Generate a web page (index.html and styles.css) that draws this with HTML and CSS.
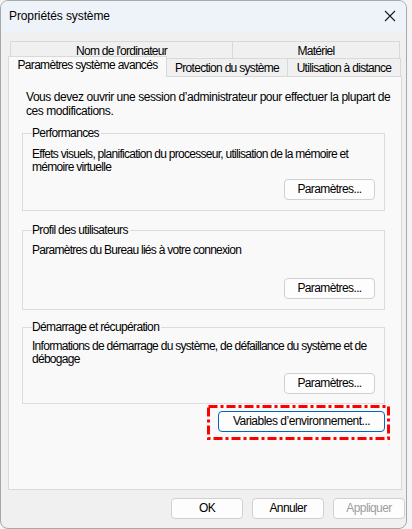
FILE: index.html
```html
<!DOCTYPE html>
<html lang="fr">
<head>
<meta charset="utf-8">
<title>Propriétés système</title>
<link rel="stylesheet" href="styles.css">
</head>
<body>
<div class="window">
  <div class="titlebar">
    <span class="title">Propriétés système</span>
    <svg class="close" width="12" height="12" viewBox="0 0 12 12"><path d="M1 1 L11 11 M11 1 L1 11" stroke="#1a1a1a" stroke-width="1.1" fill="none"/></svg>
  </div>
  <div class="client">
    <div class="tabs">
      <div class="tabrow row1">
        <div class="tab t-nom">Nom de l'ordinateur</div>
        <div class="tab t-mat">Matériel</div>
      </div>
      <div class="tabrow row2">
        <div class="tab selected t-adv">Paramètres système avancés</div>
        <div class="tab t-pro">Protection du système</div>
        <div class="tab t-uti">Utilisation à distance</div>
      </div>
    </div>
    <div class="panel">
      <p class="intro">Vous devez ouvrir une session d’administrateur pour effectuer la plupart de ces modifications.</p>
      <fieldset class="group g-perf">
        <legend>Performances</legend>
        <p class="desc">Effets visuels, planification du processeur, utilisation de la mémoire et mémoire virtuelle</p>
        <div class="btnrow"><button class="btn">Paramètres...</button></div>
      </fieldset>
      <fieldset class="group g-prof">
        <legend>Profil des utilisateurs</legend>
        <p class="desc">Paramètres du Bureau liés à votre connexion</p>
        <div class="btnrow"><button class="btn">Paramètres...</button></div>
      </fieldset>
      <fieldset class="group g-dem">
        <legend>Démarrage et récupération</legend>
        <p class="desc">Informations de démarrage du système, de défaillance du système et de débogage</p>
        <div class="btnrow"><button class="btn">Paramètres...</button></div>
      </fieldset>
      <div class="envrow">
        <div class="highlight">
          <svg class="dashbox" width="183" height="35" viewBox="0 0 183 35"><rect x="1.5" y="1.5" width="180" height="32" fill="none" stroke="#ff0000" stroke-width="3" stroke-dasharray="9 3 3 3"/></svg>
          <button class="btn btn-env">Variables d’environnement...</button>
        </div>
      </div>
    </div>
    <div class="footer">
      <button class="btn btn-foot">OK</button>
      <button class="btn btn-foot">Annuler</button>
      <button class="btn btn-foot disabled">Appliquer</button>
    </div>
  </div>
</div>
</body>
</html>
```
FILE: styles.css
```css
* { box-sizing: border-box; }
html, body { margin: 0; padding: 0; }
body {
  background: #f4f4f4;
  width: 412px;
  height: 529px;
  overflow: hidden;
  font-family: "Liberation Sans", Arial, sans-serif;
  font-size: 12px;
  letter-spacing: -0.45px;
  color: #000;
}
.window {
  width: 407px;
  height: 529px;
  border: 1px solid #a8a8a8;
  border-radius: 8px;
  background: #f0f0f0;
  overflow: hidden;
  display: flex;
  flex-direction: column;
}
.titlebar {
  height: 31px;
  flex: none;
  background: #eef3f9;
  display: flex;
  align-items: center;
  justify-content: space-between;
  padding: 0 10px 0 8px;
}
.title { font-size: 12px; letter-spacing: -0.1px; color: #000; margin-top: -1px; }
.close { display: block; margin-top: -1px; }
.client { flex: 1; padding: 9px 0 0 7px; }
.tabs { display: flex; flex-direction: column; }
.tabrow { display: flex; }
.row1 { margin-left: 2px; height: 17px; }
.row2 { height: 18px; }
.tab {
  border: 1px solid #d9d9d9;
  border-bottom: none;
  background: #f0f0f0;
  text-align: center;
  line-height: 18px;
  white-space: nowrap;
  letter-spacing: -0.7px;
}
.row2 .tab { line-height: 17px; padding-top: 1px; }
.t-nom { width: 223px; }
.t-mat { width: 168px; margin-left: -1px; }
.t-adv { width: 159px; }
.t-pro { width: 122px; margin-left: -1px; }
.t-uti { width: 114px; margin-left: -1px; }
.row2 .tab.selected {
  position: relative;
  z-index: 2;
  background: #f9f9f9;
  margin-top: -2px;
  height: 21px;
  padding-top: 0;
  line-height: 17px;
}
.panel {
  width: 394px;
  height: 414px;
  border: 1px solid #d9d9d9;
  background: #f9f9f9;
}
.intro {
  margin: 13px 0 0 17px;
  line-height: 14px;
  width: 366px;
}
.group {
  margin: 8px 0 0 13px;
  width: 363px;
  border: 1px solid #dcdcdc;
  padding: 0 9px 10px 9px;
  min-width: 0;
}
.group legend {
  padding: 0 2px 0 0;
  line-height: 14px;
  letter-spacing: -0.65px;
}
.desc { margin: 8px -8px 0 0; line-height: 13px; letter-spacing: -0.72px; }
.btnrow { display: flex; justify-content: flex-end; }
.btn {
  font-family: "Liberation Sans", Arial, sans-serif;
  font-size: 12px;
  letter-spacing: -0.6px;
  color: #000;
  height: 21px;
  border: 1px solid #d0d0d0;
  border-radius: 4px;
  background: #fdfdfd;
  padding: 0;
  line-height: 19px;
}
.group .btn { width: 91px; }
.g-perf .btnrow { margin-top: 5px; }
.g-prof { margin-top: 12px; }
.g-prof .desc { margin-top: 7px; }
.g-prof .btnrow { margin-top: 21px; }
.g-dem { margin-top: 10px; padding-bottom: 9px; }
.g-dem .desc { margin-top: 6px; }
.g-dem .btnrow { margin-top: 7px; }
.envrow { display: flex; justify-content: flex-end; margin: 1px 11px 0 0; }
.highlight {
  position: relative;
  width: 183px;
  height: 35px;
  padding: 6px 0 0 11px;
}
.dashbox { position: absolute; left: 0; top: 0; }
.btn-env {
  width: 167px;
  border-color: #0067c0;
  position: relative;
  letter-spacing: -0.5px;
}
.footer {
  display: flex;
  justify-content: flex-end;
  gap: 9px;
  padding: 8px 1px 0 0;
}
.btn-foot { width: 72px; }
.disabled { color: #9d9d9d; }
```
